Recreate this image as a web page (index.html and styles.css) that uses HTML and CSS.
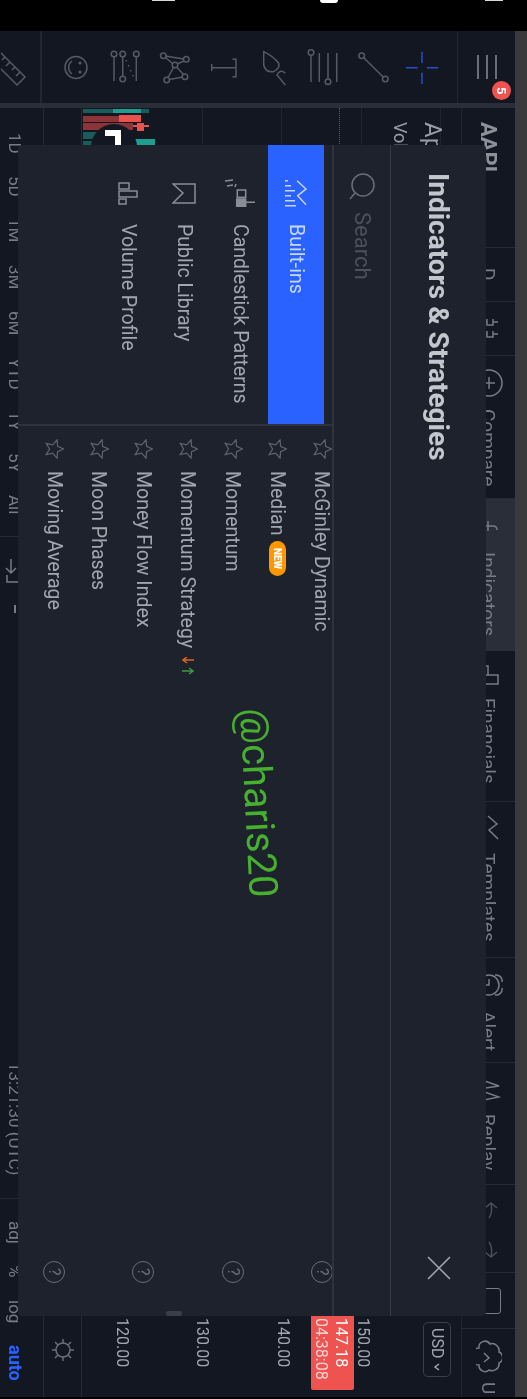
FILE: index.html
```html
<!DOCTYPE html>
<html lang="en">
<head>
    <meta charset="UTF-8">
    <meta name="viewport" content="width=device-width, initial-scale=1.0">
    <title>Indicators &amp; Strategies</title>
    <link rel="stylesheet" href="styles.css">
</head>
<body>
    <svg class="defs" width="0" height="0">
        <symbol id="star" viewBox="0 0 20 20"><polygon points="19.5,10 13.56,12.59 13.09,19.2 8.64,14.18 2.2,15.6 5.6,10 2.2,4.4 8.64,5.82 13.09,.8 13.56,7.41"/></symbol>
    </svg>

    <div class="status">
        <span class="blip blip-a"></span>
        <span class="blip blip-b"></span>
        <span class="blip blip-c"></span>
    </div>

    <div class="app">
        <div class="edge"></div>
        <div class="workspace">
            <!-- drawing tools run along the top of the rotated screen -->
            <div class="drawbar">
                <div class="draw-ruler">
                    <svg class="ico" width="40" height="40" viewBox="0 0 40 40"><path d="M-2 4L24 30L16 38L-10 12M4 10l-3 3M9 15l-4 4M14 20l-3 3M19 25l-4 4"/></svg>
                </div>
                <div class="draw-tools">
                    <div class="tool"><svg class="ico" width="40" height="40" viewBox="0 0 40 40"><circle cx="20" cy="20.5" r="11"/><path d="M16 14a8 8 0 0 0 0 13"/><circle cx="24" cy="16" r=".8"/><circle cx="24" cy="25" r=".8"/></svg></div>
                    <div class="tool"><svg class="ico" width="40" height="40" viewBox="0 0 40 40"><circle cx="9" cy="7" r="2.8"/><path d="M9 10v24"/><circle cx="17.7" cy="7" r="2.8"/><path d="M17.7 10v19"/><circle cx="17.7" cy="32" r="2.8"/><circle cx="31.3" cy="7" r="2.8"/><path d="M31.3 10v24"/><path d="M21 13l9 20" stroke-dasharray="1.5 4"/></svg></div>
                    <div class="tool"><svg class="ico" width="40" height="40" viewBox="0 0 40 40"><path d="M10.5 9l18 3M10.5 10.500l7 6M29 14l-7 3M18.500 20.500l-5.500 10M22 20.500l6.500 7M14.500 32.500l13-2.500"/><circle cx="8.300" cy="8.700" r="2.800"/><circle cx="31.300" cy="12.300" r="2.800"/><circle cx="20" cy="18" r="2.800"/><circle cx="11.700" cy="33" r="2.800"/><circle cx="30" cy="29.700" r="2.800"/></svg></div>
                    <div class="tool"><svg class="ico" width="40" height="40" viewBox="0 0 40 40"><path d="M7.700 17v7M7.700 20.700H31M28.500 12.300H32v17.400h-3.500"/></svg></div>
                    <div class="tool"><svg class="ico" width="40" height="40" viewBox="0 0 40 40"><path d="M9.700 4.700V18Q11.300 25.700 19.700 24.700Q26.300 21.300 24.700 16.300Q19.700 9.700 9.700 4.700ZM31.300 38L23 28Q26.300 21.300 31.300 26.300"/></svg></div>
                    <div class="tool"><svg class="ico" width="40" height="40" viewBox="0 0 40 40"><circle cx="8" cy="5.500" r="2.800"/><path d="M8 8.500V35M16.300 6v29M25 6v26"/><circle cx="25" cy="34.700" r="2.800"/><path d="M33.700 6v29"/></svg></div>
                    <div class="tool"><svg class="ico" width="40" height="40" viewBox="0 0 40 40"><circle cx="8.700" cy="8.700" r="2.800"/><path d="M10.700 10.700l19.500 19.300"/><circle cx="32.300" cy="32" r="2.800"/></svg></div>
                    <div class="tool tool-active"><svg class="ico" width="40" height="40" viewBox="0 0 40 40"><path d="M4 20.700h11.700M24.700 20.700h11.600M20 4.700V16M20 25.700V37"/></svg></div>
                </div>
                <div class="draw-menu">
                    <svg class="ico ico-bold" width="30" height="40" viewBox="0 0 30 40"><path d="M6 8v24M15 8v24M24 8v24"/></svg>
                    <span class="badge">5</span>
                </div>
            </div>
            <div class="draw-sep"></div>

            <div class="main">
                <div class="topbar">
                    <div class="top-item top-symbol">AAPL</div>
                    <div class="top-item top-center">D</div>
                    <div class="top-item top-center"><svg class="ico" width="22" height="24" viewBox="0 0 22 24"><path d="M2 5h7M9 2v6h6V2M15 5h5M2 17h7M9 14v6h6v-6M15 17h5"/></svg></div>
                    <div class="top-item"><svg class="ico" width="28" height="28" viewBox="0 0 28 28"><circle cx="14" cy="14" r="13"/><path d="M14 8v12M8 14h12"/></svg><span>Compare</span></div>
                    <div class="top-item top-on"><svg class="ico" width="20" height="16" viewBox="0 0 20 16"><path d="M0 8h14q4 0 4 4M9 3v10"/></svg><span>Indicators</span></div>
                    <div class="top-item"><svg class="ico" width="22" height="22" viewBox="0 0 22 22"><path d="M0 2h10V11h10V20H0M10 11H0"/></svg><span>Financials</span></div>
                    <div class="top-item"><svg class="ico" width="24" height="26" viewBox="0 0 24 26"><path d="M11 1l9 8l-8 6l9 9M8 24v-1"/></svg><span>Templates</span></div>
                    <div class="top-item"><svg class="ico" width="28" height="28" viewBox="0 0 28 28"><circle cx="14" cy="14" r="10"/><path d="M14 8v6h-5M20 4a6 6 0 0 1 7 7M20 24a6 6 0 0 0 7-7"/></svg><span>Alert</span></div>
                    <div class="top-item"><svg class="ico" width="24" height="26" viewBox="0 0 24 26"><path d="M2 3l20 7L2 13M2 14l20 7L2 25"/></svg><span>Replay</span></div>
                    <div class="top-item top-undo">
                        <svg class="ico" width="24" height="18" viewBox="0 0 24 18"><path d="M8 6l6-5l6 5M14 1q2 9-2 15"/></svg>
                        <svg class="ico" width="24" height="18" viewBox="0 0 24 18"><path d="M8 12l6 5l6-5M14 17q2-9-2-15"/></svg>
                    </div>
                    <div class="top-item top-center"><div class="top-frame"></div></div>
                    <div class="top-item top-cloud"><svg class="ico" width="26" height="34" viewBox="0 0 26 34"><path d="M3 8a6 6 0 0 1 11-4a7 7 0 0 1 9 8a6 6 0 0 1 0 11a7 7 0 0 1-10 7a6 6 0 0 1-10-5a8 8 0 0 1 0-17ZM8 13l5 5l-5 4"/></svg><span>U</span></div>
                </div>

                <div class="pane">
                    <div class="chart">
                        <div class="legend">
                            <div class="legend-name">Apple Inc · 1D</div>
                            <div class="legend-vol">Vol 62.1M</div>
                        </div>
                        <div class="now-line"></div>
                        <svg class="bars" width="80" height="40" viewBox="0 0 80 40">
                            <rect x="0" y="0" width="66" height="4" fill="#1a5b5c"/>
                            <rect x="30" y="0" width="28" height="4" fill="#1f9e8f"/>
                            <rect x="0" y="7" width="47" height="6" fill="#8c3438"/>
                            <rect x="36" y="6" width="22" height="7" fill="#e8524f"/>
                            <rect x="0" y="14" width="50" height="7" fill="#8c3438"/>
                            <rect x="50" y="16" width="16" height="2" fill="#e8524f"/>
                            <rect x="54" y="14" width="7" height="8" fill="#e8524f"/>
                            <rect x="0" y="23" width="24" height="7" fill="#1a5b5c"/>
                            <rect x="0" y="32" width="24" height="6" fill="#1a5b5c"/>
                            <rect x="52" y="30" width="20" height="8" fill="#1f9e8f"/>
                            <circle cx="31" cy="38" r="23" fill="#131722"/>
                            <path d="M22 21h16v18h-6v-12h-10z" fill="#fff"/>
                            <circle cx="35" cy="35" r="2.500" fill="#fff"/>
                        </svg>
                    </div>
                    <div class="axis">
                        <div class="axis-usd"><span class="usd">USD<svg class="usd-caret" width="8" height="8" viewBox="0 0 8 8"><path d="M6 1L2 4l4 3"/></svg></span></div>
                        <div class="axis-price">150.00</div>
                        <div class="axis-price">140.00</div>
                        <div class="axis-price">130.00</div>
                        <div class="axis-price">120.00</div>
                        <div class="price-tag">
                            <div>147.18</div>
                            <div class="price-time">04:38:08</div>
                        </div>
                    </div>
                </div>

                <div class="timeaxis">
                    <svg class="ico" width="24" height="24" viewBox="0 0 24 24"><circle cx="12" cy="12" r="7"/><path d="M12 1v4M12 19v4M1 12h4M19 12h4M4 4l3 3M17 17l3 3M4 20l3-3M17 7l3-3"/></svg>
                </div>

                <div class="timebar">
                    <span>1D</span><span>5D</span><span>1M</span><span>3M</span><span>6M</span><span>YTD</span><span>1Y</span><span>5Y</span><span>All</span>
                    <i class="time-rule"></i>
                    <svg class="ico" width="20" height="24" viewBox="0 0 20 24"><path d="M6 0v14M1 9l5 5l5-5M2 16v7h12"/></svg>
                    <i class="time-tick"></i>
                    <span class="time-clock">13:21:30 (UTC)</span>
                    <i class="time-rule"></i>
                    <span>adj</span><span>%</span><span>log</span>
                    <span class="time-auto">auto</span>
                </div>
            </div>
        </div>
    </div>

    <div class="dialog">
        <div class="dlg-head">
            <h1>Indicators &amp; Strategies</h1>
            <svg class="close" width="24" height="24" viewBox="0 0 24 24"><path d="M1 1l22 22M23 1L1 23"/></svg>
        </div>
        <div class="dlg-search">
            <svg class="ico search-ico" width="27" height="27" viewBox="0 0 27 27"><circle cx="14" cy="12" r="11"/><path d="M6 20l-5 6"/></svg>
            <span>Search</span>
        </div>
        <div class="dlg-body">
            <div class="side">
                <div class="side-item side-on">
                    <span class="side-ico"><svg class="ico" width="22" height="28" viewBox="0 0 22 28"><path d="M0 1.700h3M0 6.700h6M0 11.700h10M0 16.700h6M0 21.700h10M0 26.700h11M12 1.700l9 8.300l-8.300 6.700l8.300 9"/></svg></span>
                    <span>Built-ins</span>
                </div>
                <div class="side-item">
                    <span class="side-ico"><svg class="ico" width="30" height="28" viewBox="0 0 30 28"><path d="M0 2l8-1M2 7l6-1M10 8l1-3M20.700 23.300H30"/><rect x="12.300" y="11" width="8.400" height="7.300"/><rect class="solid" x="11.700" y="20" width="9" height="7.700"/></svg></span>
                    <span>Candlestick Patterns</span>
                </div>
                <div class="side-item">
                    <span class="side-ico"><svg class="ico" width="24" height="21" viewBox="0 0 24 21"><path d="M1 1h22v19H1l10-10z"/></svg></span>
                    <span>Public Library</span>
                </div>
                <div class="side-item">
                    <span class="side-ico"><svg class="ico" width="20" height="23" viewBox="0 0 20 23"><rect x="1" y="1" width="10" height="6"/><rect x="1" y="9" width="18" height="6"/><rect x="1" y="17" width="7" height="5"/></svg></span>
                    <span>Volume Profile</span>
                </div>
            </div>
            <div class="list">
                <div class="row"><svg class="star"><use href="#star"/></svg><span>McGinley Dynamic</span><span class="help">?</span></div>
                <div class="row"><svg class="star"><use href="#star"/></svg><span>Median</span><span class="new">NEW</span></div>
                <div class="row"><svg class="star"><use href="#star"/></svg><span>Momentum</span><span class="help">?</span></div>
                <div class="row"><svg class="star"><use href="#star"/></svg><span>Momentum Strategy</span>
                    <svg class="arrows" width="12" height="18" viewBox="0 0 12 18"><path class="arrow-down" d="M12 3H1M5 0L1 3l4 3"/><path class="arrow-up" d="M0 14h11M7 11l4 3l-4 3"/></svg>
                </div>
                <div class="row"><svg class="star"><use href="#star"/></svg><span>Money Flow Index</span><span class="help">?</span></div>
                <div class="row"><svg class="star"><use href="#star"/></svg><span>Moon Phases</span></div>
                <div class="row"><svg class="star"><use href="#star"/></svg><span>Moving Average</span><span class="help">?</span></div>
            </div>
        </div>
        <div class="dlg-grip"></div>
    </div>

    <div class="watermark">@charis20</div>
</body>
</html>
```

FILE: styles.css
```css
* {
    margin: 0;
    padding: 0;
    box-sizing: border-box;
}

html, body {
    width: 527px;
    height: 1399px;
    overflow: hidden;
}

/* the reference is a soft, scaled-up photo of a phone screen */
body {
    position: relative;
    background: #000;
    color: #787b86;
    font-family: Roboto, "Liberation Sans", sans-serif;
    filter: blur(0.4px);
}

.defs {
    position: absolute;
}

.ico {
    flex: none;
    fill: none;
    stroke: currentColor;
    stroke-width: 1.5;
}

.ico .solid {
    fill: currentColor;
}

/* phone status bar, only the tips of the icons show */
.status {
    display: flex;
    align-items: flex-start;
    height: 31px;
    padding-left: 152px;
}

.blip {
    display: block;
    background: #d8d8d8;
}

.blip-a {
    width: 23px;
    height: 1px;
}

.blip-b {
    width: 18px;
    height: 3px;
    margin-left: 145px;
    background: #fff;
    border-radius: 0 0 9px 9px;
}

.blip-c {
    width: 18px;
    height: 1px;
    margin-left: 147px;
}

/* whole app is turned on its side, so it flows right to left */
.app {
    writing-mode: vertical-rl;
    display: flex;
    flex-direction: column;
    height: 1366px;
    background: #131722;
}

.edge {
    flex: none;
    block-size: 13px;
    background: #3a3a3c;
}

.workspace {
    flex: 1;
    display: flex;
    min-block-size: 0;
}

.drawbar {
    writing-mode: horizontal-tb;
    flex: none;
    display: flex;
    width: 514px;
    height: 72px;
    color: #565a65;
}

.draw-ruler {
    width: 41px;
    display: flex;
    align-items: center;
    overflow: hidden;
    border-right: 2px solid #22262f;
}

.draw-tools {
    width: 415px;
    padding-left: 9px;
    display: flex;
    align-items: center;
}

.tool {
    width: 49.5px;
    display: flex;
    justify-content: center;
}

.tool-active {
    color: #2450c8;
}

.draw-menu {
    position: relative;
    flex: 1;
    display: flex;
    align-items: center;
    justify-content: center;
    border-left: 1px solid #22262f;
    color: #6b6e78;
}

.ico-bold {
    stroke-width: 2;
}

.badge {
    writing-mode: vertical-rl;
    position: absolute;
    left: 34px;
    top: 50px;
    width: 19px;
    height: 19px;
    border-radius: 50%;
    background: #ef5350;
    color: #fff;
    font-size: 13px;
    font-weight: 700;
    line-height: 19px;
    text-align: center;
}

.draw-sep {
    flex: none;
    inline-size: 5px;
    background: #2a2e39;
}

.main {
    flex: 1;
    display: flex;
    flex-direction: column;
    min-inline-size: 0;
}

.topbar {
    flex: none;
    block-size: 54px;
    display: grid;
    grid-template-columns: 140px 54px 54px 143px 152px 151px 156px 105px 122px 88px 56px 68px;
    border-block-end: 1px solid #22262f;
    font-size: 19px;
}

.top-item {
    display: flex;
    align-items: center;
    gap: 12px;
    padding-inline-start: 13px;
    border-inline-end: 1px solid #262a34;
    overflow: hidden;
    white-space: nowrap;
}

.top-symbol {
    padding-inline-start: 14px;
    color: #8d9099;
    font-size: 22px;
    font-weight: 700;
}

.top-center {
    justify-content: center;
    padding: 0;
}

.top-on {
    background: #2a2e39;
    padding-inline-start: 19px;
    gap: 18px;
    border-inline-end: 0;
}

.top-undo {
    gap: 20px;
    padding-inline-start: 17px;
    color: #4a4e59;
}

.top-frame {
    inline-size: 26px;
    block-size: 24px;
    border: 1.5px solid #787b86;
    border-radius: 3px;
}

.top-cloud {
    padding-inline-start: 11px;
    gap: 8px;
    border: 0;
}

.pane {
    flex: 1;
    display: flex;
    min-block-size: 0;
}

.chart {
    position: relative;
    flex: 1;
    overflow: hidden;
    background-image: repeating-linear-gradient(to left, transparent 0 20px, #20242e 20px 21px, transparent 21px 79.5px);
}

.legend {
    position: absolute;
    inset-block-start: 14px;
    inset-inline-start: 14px;
    white-space: nowrap;
    color: #9a9da6;
}

.legend-name {
    font-size: 24px;
    line-height: 28px;
    margin-block-end: 8px;
}

.legend-vol {
    font-size: 18px;
    line-height: 22px;
}

.now-line {
    position: absolute;
    inset-block-start: 121px;
    inset-inline-start: 0;
    inline-size: 100%;
    block-size: 1px;
    border-block-start: 1px dotted #a8353f;
}

.bars {
    position: absolute;
    left: 1px;
    top: 1px;
}

.axis {
    position: relative;
    flex: none;
    inline-size: 81px;
    display: flex;
    flex-direction: column;
}

.axis-usd {
    block-size: 57px;
    display: flex;
    align-items: flex-start;
    padding-inline-start: 6px;
    padding-block-start: 10px;
}

.usd {
    display: flex;
    align-items: center;
    justify-content: center;
    gap: 4px;
    block-size: 28px;
    inline-size: 55px;
    border: 1.5px solid #3b3f4a;
    border-radius: 5px;
    color: #a3a6af;
    font-size: 16px;
    white-space: nowrap;
}

.usd-caret {
    fill: none;
    stroke: #a3a6af;
    stroke-width: 1.5;
}

.axis-price {
    block-size: 80.5px;
    display: flex;
    align-items: center;
    padding-inline-start: 2px;
    color: #a3a6af;
    font-size: 16px;
}

.price-tag {
    position: absolute;
    inset-block-start: 107px;
    inline-size: 74px;
    block-size: 43px;
    padding-inline-start: 2px;
    padding-block-start: 3px;
    background: #ef5350;
    border-radius: 0 0 2px 2px;
    color: #fff;
    font-size: 16px;
    line-height: 20px;
}

.price-time {
    color: #fbd6d5;
}

.timeaxis {
    flex: none;
    block-size: 39px;
    display: flex;
    align-items: center;
    justify-content: flex-end;
    padding-inline-end: 35px;
    border-block-start: 1px solid #262a34;
    border-block-end: 1px solid #262a34;
    color: #6b6e78;
}

.timebar {
    flex: none;
    block-size: 43px;
    display: flex;
    align-items: center;
    gap: 22px;
    padding-inline-start: 25px;
    padding-block-start: 13px;
    font-size: 17px;
    white-space: nowrap;
}

.time-rule {
    display: block;
    flex: none;
    inline-size: 1px;
    block-size: 30px;
    background: #262a34;
}

.time-tick {
    display: block;
    flex: none;
    inline-size: 8px;
    block-size: 2px;
    background: #787b86;
}

.time-clock {
    margin-inline-start: auto;
}

.time-auto {
    color: #2962ff;
    font-size: 18px;
    font-weight: 700;
    margin-inline-end: 16px;
}

/* dialog sits over the chart */
.dialog {
    writing-mode: vertical-rl;
    position: absolute;
    left: 18px;
    top: 145px;
    width: 468px;
    height: 1171px;
    display: flex;
    flex-direction: column;
    overflow: hidden;
    background: #1e222d;
    border-radius: 4px;
    color: #a3a6af;
}

.dlg-head {
    flex: none;
    block-size: 96px;
    display: flex;
    align-items: center;
    justify-content: space-between;
    padding-inline: 28px 36px;
    border-block-end: 1px solid #363a45;
}

.dlg-head h1 {
    color: #c4c6cd;
    font-size: 28px;
    font-weight: 700;
    white-space: nowrap;
}

.close {
    fill: none;
    stroke: #a3a6af;
    stroke-width: 1.5;
}

.dlg-search {
    flex: none;
    block-size: 58px;
    display: flex;
    align-items: center;
    gap: 12px;
    padding-inline-start: 28px;
    border-block-end: 2px solid #2f333e;
    color: #4c505b;
    font-size: 22px;
}

.search-ico {
    color: #6a6d78;
}

.dlg-body {
    flex: 1;
    display: flex;
    min-block-size: 0;
    font-size: 19.5px;
}

.side {
    flex: none;
    inline-size: 281px;
    padding-block-start: 8px;
    border-inline-end: 2px solid #2f333e;
    display: flex;
    flex-direction: column;
}

.side-item {
    flex: none;
    block-size: 56px;
    display: flex;
    align-items: center;
    gap: 16px;
    padding-inline-start: 33px;
}

.side-on {
    background: #2962ff;
    color: #c9d6ff;
}

.side-ico {
    inline-size: 30px;
    display: flex;
    justify-content: center;
    color: #8a8d96;
}

.side-on .side-ico {
    color: #c9d6ff;
}

.list {
    flex: 1;
    overflow: hidden;
    min-inline-size: 0;
}

.row {
    block-size: 44.6px;
    display: flex;
    align-items: center;
    padding-inline: 13px 33px;
    white-space: nowrap;
}

/* list is scrolled a little, the first row is cut by the divider */
.row:first-child {
    margin-block-start: -12px;
}

.star {
    flex: none;
    width: 20px;
    height: 20px;
    margin-inline-end: 12px;
    fill: none;
    stroke: #60636e;
    stroke-width: 1.2;
}

.help {
    flex: none;
    margin-inline-start: auto;
    inline-size: 22px;
    block-size: 22px;
    border: 1.5px solid #6a6d78;
    border-radius: 50%;
    color: #6a6d78;
    font-size: 16px;
    line-height: 19px;
    text-align: center;
}

.new {
    flex: none;
    margin-inline-start: 6px;
    inline-size: 35px;
    block-size: 17px;
    background: #ff9800;
    border-radius: 9px;
    color: #fff;
    font-size: 10px;
    font-weight: 900;
    line-height: 17px;
    text-align: center;
}

.arrows {
    flex: none;
    margin-inline-start: 9px;
    fill: none;
    stroke-width: 1.5;
}

.arrow-down {
    stroke: #e0641e;
}

.arrow-up {
    stroke: #3c9a3f;
}

.dlg-grip {
    position: absolute;
    left: 148px;
    bottom: 0;
    width: 16px;
    height: 5px;
    background: #3a3e49;
    border-radius: 2px;
}

/* sticker text added on top of the screenshot */
.watermark {
    writing-mode: vertical-rl;
    position: absolute;
    left: 233px;
    top: 708px;
    color: #46b02f;
    font-size: 40px;
    font-weight: 400;
    line-height: 50px;
    transform: rotate(-3deg);
}
```
